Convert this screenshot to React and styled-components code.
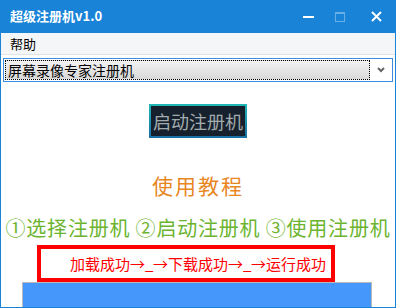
import React, { useState } from 'react'
import styled, { createGlobalStyle } from 'styled-components'

const GlobalStyle = createGlobalStyle`
    html, body {
        margin: 0;
        padding: 0;
        background: #ffffff;
    }
    * {
        box-sizing: border-box;
    }
`

const cjk = `"Noto Sans CJK SC", "Noto Sans", sans-serif`

const Window = styled.div`
    width: 396px;
    height: 308px;
    display: flex;
    flex-direction: column;
    background: #ffffff;
    border: 1px solid #1883d7;
    border-top: 0;
    overflow: hidden;
    font-family: ${cjk};
`

const TitleBar = styled.div`
    height: 33px;
    margin: 0 -1px;
    display: flex;
    align-items: center;
    background: #1883d7;
    color: #ffffff;
    padding-left: 10px;
`

const Title = styled.div`
    flex: 1;
    font-size: 13px;
    font-weight: 700;
    line-height: 1;
    padding-bottom: 2px;
`

const Ctrl = styled.div`
    width: ${(p) => p.w}px;
    height: 33px;
    display: flex;
    align-items: center;
    justify-content: center;
    opacity: ${(p) => (p.disabled ? 0.35 : 1)};
`

const MenuBar = styled.div`
    height: 22px;
    display: flex;
    align-items: center;
    background: #f5f6f7;
    border-bottom: 1px solid #e2e3e4;
    padding-left: 9px;
    font-size: 13px;
    color: #000000;
`

const Body = styled.div`
    flex: 1;
    display: flex;
    flex-direction: column;
    align-items: center;
`

const Select = styled.div`
    align-self: stretch;
    margin: 3px 2px 0 2px;
    height: 24px;
    border: 1px solid #3b8ede;
    display: flex;
    align-items: center;
    padding: 1px;
`

const SelectFace = styled.div`
    flex: 1;
    height: 100%;
    display: flex;
    align-items: center;
    padding-left: 2px;
    border: 1px dotted #000000;
    background: linear-gradient(#f2f2f2, #d9d9d9);
    font-size: 14px;
    color: #000000;
    line-height: 1;
`

const Chevron = styled.div`
    width: 21px;
    display: flex;
    justify-content: center;
    align-items: center;
`

const StartButton = styled.button`
    margin-top: 22px;
    width: 98px;
    height: 34px;
    padding: 0;
    border: 2px solid transparent;
    background:
        linear-gradient(#16212d, #16212d) padding-box,
        linear-gradient(#20b8b6, #1a6ea4) border-box;
    color: #a3acad;
    font-family: ${cjk};
    font-size: 18px;
    line-height: 1;
    cursor: pointer;
`

const Heading = styled.div`
    margin-top: 37px;
    font-size: 21px;
    letter-spacing: 2px;
    color: #e8861f;
    line-height: 1;
`

const Steps = styled.div`
    margin-top: 22px;
    font-size: 20px;
    color: #6cb42f;
    line-height: 1;
    white-space: nowrap;
    letter-spacing: 0.8px;
`

const StatusBox = styled.div`
    align-self: flex-start;
    margin: 7px 0 0 36px;
    width: 298px;
    height: 37px;
    border: 4px solid #ff0000;
    display: flex;
    align-items: center;
    padding-left: 29px;
    font-size: 15px;
    color: #ff0000;
    line-height: 1;
    white-space: nowrap;
`

const Arrow = styled.span`
    display: inline-block;
    width: 15px;
    text-align: center;
`

const Under = styled.span`
    display: inline-block;
    width: 8px;
    text-align: center;
`

const Progress = styled.div`
    align-self: flex-start;
    margin-left: 21px;
    width: 350px;
    flex: 1;
    background: #4697fb;
    border: 1px solid #b9b9b9;
    border-bottom: 0;
`

const steps = ['加载成功', '下载成功', '运行成功']

const App = () => {
    const [done, setDone] = useState(steps.length)

    return (
        <>
            <GlobalStyle />
            <Window>
                <TitleBar>
                    <Title>超级注册机v1.0</Title>
                    <Ctrl w={30}>
                        <svg width="11" height="10" viewBox="0 0 11 10">
                            <rect x="0" y="4" width="11" height="2" fill="#fff" />
                        </svg>
                    </Ctrl>
                    <Ctrl w={33} disabled>
                        <svg width="10" height="10" viewBox="0 0 10 10">
                            <rect x="0.5" y="0.5" width="9" height="9" fill="none" stroke="#fff" />
                            <rect x="0" y="0" width="10" height="2" fill="#fff" />
                        </svg>
                    </Ctrl>
                    <Ctrl w={40}>
                        <svg width="11" height="11" viewBox="0 0 11 11">
                            <path d="M1 1L10 10M10 1L1 10" stroke="#fff" strokeWidth="2" />
                        </svg>
                    </Ctrl>
                </TitleBar>
                <MenuBar>帮助</MenuBar>
                <Body>
                    <Select>
                        <SelectFace>屏幕录像专家注册机</SelectFace>
                        <Chevron>
                            <svg width="8" height="6" viewBox="0 0 8 6">
                                <path d="M1 1L4 4L7 1" fill="none" stroke="#666" strokeWidth="2" />
                            </svg>
                        </Chevron>
                    </Select>
                    <StartButton onClick={() => setDone(steps.length)}>启动注册机</StartButton>
                    <Heading>使用教程</Heading>
                    <Steps>①选择注册机 ②启动注册机 ③使用注册机</Steps>
                    <StatusBox>
                        {steps.slice(0, done).map((s, i) => (
                            <React.Fragment key={s}>
                                {i > 0 && (
                                    <>
                                        <Arrow>→</Arrow>
                                        <Under>_</Under>
                                        <Arrow>→</Arrow>
                                    </>
                                )}
                                {s}
                            </React.Fragment>
                        ))}
                    </StatusBox>
                    <Progress />
                </Body>
            </Window>
        </>
    )
}

export default App
